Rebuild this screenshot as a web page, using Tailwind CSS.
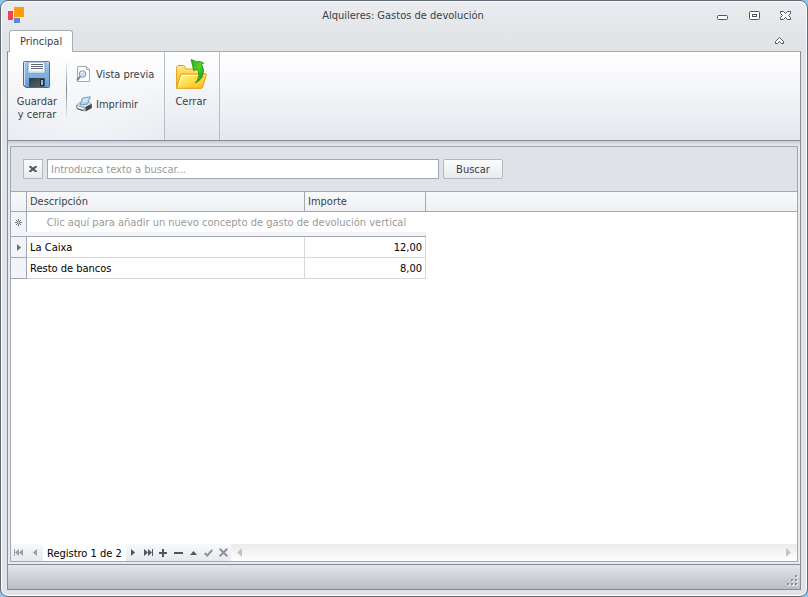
<!DOCTYPE html>
<html lang="es">
<head>
    <meta charset="UTF-8">
    <meta name="viewport" content="width=device-width, initial-scale=1.0">
    <title>Alquileres: Gastos de devolución</title>
    <script src="https://cdn.jsdelivr.net/npm/@tailwindcss/browser@4"></script>
</head>
<body class="h-screen bg-[#8fc4ee] font-['DejaVu_Sans_Condensed','DejaVu_Sans',sans-serif] text-[11px] leading-[13px] text-[#3b3e47] select-none">
    <div class="flex h-full flex-col rounded-lg border border-[#626a76] bg-linear-to-b from-[#ebecef] to-[#e0e4e7] to-[40px] px-[6px] pb-[6px] shadow-[inset_0_0_0_1px_#fafbfc]">

        <!-- Title bar -->
        <header class="flex h-[29px] shrink-0 items-center">
            <svg class="mb-px h-4 w-[17px]" viewBox="0 0 17 16" shape-rendering="crispEdges">
                <rect x="1" y="4" width="5" height="9" fill="#e8445a"/>
                <rect x="7" y="0" width="10" height="10" fill="#ff9c0a"/>
                <rect x="7" y="11" width="6" height="5" fill="#5b87d6"/>
            </svg>
            <h1 class="flex-1 pl-[68px] text-center">Alquileres: Gastos de devolución</h1>
            <div class="flex items-center gap-4 pr-[7px]">
                <button type="button" aria-label="Minimizar" class="h-4 w-4">
                    <svg class="h-4 w-4" viewBox="0 0 16 16" fill="#fff" stroke="#50555e"><rect x="3.500" y="7.500" width="10" height="4" rx="1"/></svg>
                </button>
                <button type="button" aria-label="Maximizar" class="h-4 w-4">
                    <svg class="h-4 w-4" viewBox="0 0 16 16" fill="#fff" stroke="#50555e"><rect x="3.500" y="3.500" width="10" height="8" rx="1"/><rect x="6.500" y="6.500" width="4" height="2"/></svg>
                </button>
                <button type="button" aria-label="Cerrar ventana" class="h-4 w-4">
                    <svg class="h-4 w-4" viewBox="0 0 16 16" fill="#fff" stroke="#50555e"><path d="M2.500 3.500h3l2 2 2-2h3v2l-2 2 2 2v2h-3l-2-2-2 2h-3v-2l2-2-2-2z"/></svg>
                </button>
            </div>
        </header>

        <!-- Ribbon tabs -->
        <nav class="flex h-[21px] shrink-0 items-start justify-between pr-[15px] pl-[2px]">
            <button type="button" class="z-10 h-[22px] rounded-t-[3px] border border-b-0 border-[#a9adb3] bg-white px-[10px]">Principal</button>
            <button type="button" aria-label="Contraer la cinta" class="mt-[5px] h-3 w-3">
                <svg class="h-3 w-3" viewBox="0 0 12 12" fill="#fff" stroke="#50555e"><path d="M1.500 6.500l4-4 4 4v2h-2l-2-2-2 2h-2z"/></svg>
            </button>
        </nav>

        <div class="flex min-h-0 flex-1 flex-col border border-t-[#a9adb3] border-r-[#858b95] border-b-[#858b95] border-l-[#858b95] bg-[#e7eaee]">

            <!-- Ribbon -->
            <div class="flex h-[89px] shrink-0 border-b border-[#858b95] bg-linear-to-b from-white to-[#e4e8ee]">
                <div class="flex border-r border-[#b9bec5] bg-radial-[at_50%_120%] from-white/50 to-transparent">
                    <button type="button" class="flex w-[58px] flex-col items-center pt-[6px]">
                        <svg class="mb-[5px] h-8 w-8" viewBox="0 0 32 32">
                            <defs>
                                <linearGradient id="disk" x1="0" y1="0" x2="0" y2="1"><stop offset="0" stop-color="#a5c8ea"/><stop offset=".5" stop-color="#82b1e0"/><stop offset="1" stop-color="#5d9be0"/></linearGradient>
                                <linearGradient id="shutter" x1="0" y1="0" x2="1" y2="1"><stop offset="0" stop-color="#333b44"/><stop offset="1" stop-color="#596674"/></linearGradient>
                            </defs>
                            <path d="M2.500 4.500q0-1 1-1h24q1 0 1 1v24q0 1-1 1H5l-2.500-2z" fill="url(#disk)" stroke="#4a6a94"/>
                            <path d="M3.500 27V4.500h24" fill="none" stroke="#cfe2f5"/>
                            <rect x="7" y="4" width="17" height="11" fill="#fff" stroke="#6f9bcb"/>
                            <path d="M7.500 12.500h16v2h-16z" fill="#dce5ee"/>
                            <path d="M10 6.500h12M10 8.500h12M10 10.500h12" stroke="#5f6670"/>
                            <rect x="8" y="20" width="16" height="9" fill="url(#shutter)"/>
                            <rect x="19.500" y="21.500" width="3" height="6" fill="#8dbdf0" stroke="#222a33"/>
                        </svg>
                        Guardar<br>y cerrar
                    </button>
                    <div class="mt-2 h-[60px] w-px bg-linear-to-b from-transparent via-[#7d8590] to-transparent"></div>
                    <div class="flex w-[97px] flex-col items-start gap-[14px] pt-[14px] pl-[9px]">
                        <button type="button" class="flex h-4 items-center gap-1">
                            <svg class="h-4 w-4" viewBox="0 0 16 16">
                                <path d="M1.500.500h9l3 3v12h-12z" fill="#fdfdfe" stroke="#a4a8b0"/>
                                <path d="M10.500.500v3h3" fill="#e2e5ea" stroke="#a4a8b0"/>
                                <circle cx="6.500" cy="8" r="3.300" fill="#c9e0f6" stroke="#8095b0"/>
                                <path d="M5 7.500q.500-1.500 2-1.500" fill="none" stroke="#fff"/>
                                <path d="M4.200 10.500L1 14.500" stroke="#777d88" stroke-width="2"/>
                            </svg>
                            Vista previa
                        </button>
                        <button type="button" class="flex h-4 items-center gap-1">
                            <svg class="h-4 w-4" viewBox="0 0 16 16">
                                <path d="M.500 9L4 6.500 13 6l2.500 2v4L10 15l-3-.500L.500 12z" fill="#a6abb4" stroke="#7a808a" stroke-width=".7"/>
                                <path d="M.800 9L4 6.700l9-.400 2.300 1.700L9.500 11z" fill="#dde0e4"/>
                                <path d="M9.500 11l6-3v4L10 15z" fill="#3f444d"/>
                                <path d="M4 9L6.500 2 14.500.800l-3 7.200z" fill="#a9d6f8" stroke="#6f8dae" stroke-width=".8"/>
                                <path d="M7.500 3.500l4.500-.700M6.800 5.500l4.500-.700" stroke="#e6f4ff"/>
                                <path d="M1.500 11l6 2" stroke="#fff" stroke-width="1.500"/>
                                <path d="M1 12.500l6 2.200" stroke="#4a4f59"/>
                            </svg>
                            Imprimir
                        </button>
                    </div>
                </div>
                <div class="border-r border-[#b9bec5]">
                    <button type="button" class="flex w-[54px] flex-col items-center pt-[6px] pr-[2px]">
                        <svg class="mb-[5px] h-8 w-8" viewBox="0 0 32 32">
                            <defs>
                                <linearGradient id="folderBack" x1="0" y1="0" x2="0" y2="1"><stop offset="0" stop-color="#ffe88c"/><stop offset="1" stop-color="#f7b520"/></linearGradient>
                                <linearGradient id="folderFront" x1="0" y1="0" x2="1" y2="1"><stop offset="0" stop-color="#fff7a8"/><stop offset=".5" stop-color="#ffdc45"/><stop offset="1" stop-color="#fdb913"/></linearGradient>
                                <linearGradient id="arrow" x1="0" y1="0" x2="1" y2="1"><stop offset="0" stop-color="#2fae1e"/><stop offset=".5" stop-color="#4fd62a"/><stop offset="1" stop-color="#13800e"/></linearGradient>
                            </defs>
                            <path d="M1.500 29V9.500l1.500-2h6l2 3.500h15q1.500 0 1.500 1.500V29z" fill="url(#folderBack)" stroke="#e8a317"/>
                            <path d="M1.500 30.300L5.500 17q.300-1 1.500-1h24.500L27.500 29q-.300 1.300-1.500 1.300z" fill="url(#folderFront)" stroke="#e79a10"/>
                            <path d="M3.500 28.500L6.800 17.500h23" fill="none" stroke="#fffbd0"/>
                            <path d="M16.200 1.500l5.500 2.300q4.500-1 7 1.500-1.500.200-2 1.200 2.800 5 1.300 10-1.500 5.500-7.500 8.300 3.500-4 3.300-8.300-.100-3-1.300-5.300l-3.800 1.300z" fill="url(#arrow)" stroke="#178a12" stroke-width=".8"/>
                        </svg>
                        Cerrar
                    </button>
                </div>
            </div>

            <!-- Grid panel -->
            <main class="flex min-h-0 flex-1 flex-col bg-linear-to-b from-[#c9cdd4] to-[#e7eaee] to-[5px] px-[2px] pt-[5px] pb-[2px]">
                <div class="flex min-h-0 flex-1 flex-col border border-[#a1a8b4] bg-white">
                    <form class="flex h-[45px] shrink-0 items-center border-b border-[#a1a8b4] bg-[#dfe2e6] pb-px pl-3">
                        <button type="button" aria-label="Borrar búsqueda" class="mr-1 flex h-5 w-5 items-center justify-center border border-[#b3b8c1] bg-linear-to-b from-[#fafbfc] to-[#e8ebee]">
                            <svg class="h-[6px] w-2" viewBox="0 0 8 6" stroke="#50565f" stroke-width="2"><path d="M.500 0l7 6M7.500 0l-7 6"/></svg>
                        </button>
                        <input type="text" aria-label="Buscar texto" placeholder="Introduzca texto a buscar..." class="mr-1 h-5 w-[392px] border border-[#a1a8b4] bg-white px-[3px] pt-px outline-none placeholder:text-[#9a9a9a]">
                        <button type="button" class="h-5 w-[60px] rounded-[2px] border border-[#b3b8c1] bg-linear-to-b from-[#fafbfc] to-[#e8ebee] pt-px">Buscar</button>
                    </form>

                    <div class="min-h-0 flex-1 overflow-hidden">
                        <table class="w-full table-fixed border-separate border-spacing-0 text-black">
                            <colgroup>
                                <col class="w-4">
                                <col class="w-[278px]">
                                <col class="w-[121px]">
                                <col>
                            </colgroup>
                            <thead>
                                <tr class="h-5 bg-linear-to-b from-[#f8f9fb] to-[#eef0f4] text-left text-[#3b3e47]">
                                    <th class="border-r border-b border-[#a1a8b4] p-0"></th>
                                    <th class="border-r border-b border-[#a1a8b4] px-[3px] py-0 font-normal">Descripción</th>
                                    <th class="border-r border-b border-[#a1a8b4] px-[3px] py-0 font-normal">Importe</th>
                                    <th class="border-b border-[#a1a8b4] p-0"></th>
                                </tr>
                            </thead>
                            <tbody>
                                <tr class="h-5">
                                    <td class="border-r border-[#a1a8b4] bg-[#f3f4f7] p-0">
                                        <svg class="mx-auto h-[7px] w-[7px]" viewBox="0 0 7 7" stroke="#6a707a"><path d="M3.500 0v7M0 3.500h7M1 1l5 5M6 1L1 6"/><circle cx="3.500" cy="3.500" r="1" fill="#fff" stroke="none"/></svg>
                                    </td>
                                    <td colspan="2" class="p-0 pt-px text-center whitespace-nowrap text-[#9a9a9a]">Clic aquí para añadir un nuevo concepto de gasto de devolución vertical</td>
                                    <td class="p-0"></td>
                                </tr>
                                <tr class="h-[5px]">
                                    <td colspan="3" class="border-b border-[#a1a8b4] bg-[#f3f4f7] p-0"></td>
                                    <td class="p-0"></td>
                                </tr>
                                <tr class="h-[21px]">
                                    <td class="border-r border-b border-[#a1a8b4] bg-[#f3f4f7] p-0">
                                        <svg class="mx-auto h-[7px] w-1" viewBox="0 0 4 7" fill="#6a707a"><path d="M0 0l4 3.500L0 7z"/></svg>
                                    </td>
                                    <td class="border-r border-b border-[#d5d8dd] px-[3px] py-0">La Caixa</td>
                                    <td class="border-r border-b border-[#d5d8dd] px-[3px] py-0 text-right">12,00</td>
                                    <td class="p-0"></td>
                                </tr>
                                <tr class="h-[21px]">
                                    <td class="border-r border-b border-[#a1a8b4] bg-[#f3f4f7] p-0"></td>
                                    <td class="border-r border-b border-[#d5d8dd] px-[3px] py-0">Resto de bancos</td>
                                    <td class="border-r border-b border-[#d5d8dd] px-[3px] py-0 text-right">8,00</td>
                                    <td class="p-0"></td>
                                </tr>
                            </tbody>
                        </table>
                    </div>

                    <!-- Record navigator -->
                    <div class="flex h-[17px] shrink-0 bg-linear-to-b from-[#f8f9fb] to-[#e6e9ed] text-[#4f5661]">
                        <button type="button" aria-label="Primero" class="flex w-[15px] items-center justify-center text-[#9a9ea6]">
                            <svg class="h-[7px] w-[9px]" viewBox="0 0 9 7" fill="currentColor"><path d="M0 0h1v7H0zM5 0v7L1 3.500zM9 0v7L5 3.500z"/></svg>
                        </button>
                        <button type="button" aria-label="Anterior" class="flex w-[17px] items-center justify-center text-[#9a9ea6]">
                            <svg class="h-[7px] w-1" viewBox="0 0 4 7" fill="currentColor"><path d="M4 0v7L0 3.500z"/></svg>
                        </button>
                        <span class="bg-white px-1 pt-[3px]">
                            <span class="block text-black">Registro 1 de 2</span>
                        </span>
                        <button type="button" aria-label="Siguiente" class="flex w-[15px] items-center justify-center">
                            <svg class="h-[7px] w-1" viewBox="0 0 4 7" fill="currentColor"><path d="M0 0l4 3.500L0 7z"/></svg>
                        </button>
                        <button type="button" aria-label="Último" class="flex w-[15px] items-center justify-center">
                            <svg class="h-[7px] w-[9px]" viewBox="0 0 9 7" fill="currentColor"><path d="M0 0l4 3.500L0 7zM4 0l4 3.500L4 7zM8 0h1v7H8z"/></svg>
                        </button>
                        <button type="button" aria-label="Añadir" class="flex w-[15px] items-center justify-center">
                            <svg class="h-2 w-2" viewBox="0 0 8 8" fill="currentColor"><path d="M3 0h2v3h3v2H5v3H3V5H0V3h3z"/></svg>
                        </button>
                        <button type="button" aria-label="Eliminar" class="flex w-[15px] items-center justify-center">
                            <svg class="h-2 w-[9px]" viewBox="0 0 9 8" fill="currentColor"><path d="M0 3h9v2H0z"/></svg>
                        </button>
                        <button type="button" aria-label="Editar" class="flex w-[15px] items-center justify-center">
                            <svg class="h-1 w-[7px]" viewBox="0 0 7 4" fill="currentColor"><path d="M3.500 0L7 4H0z"/></svg>
                        </button>
                        <button type="button" aria-label="Aceptar" class="flex w-[15px] items-center justify-center text-[#8d929a]">
                            <svg class="h-2 w-[9px]" viewBox="0 0 9 8" fill="none" stroke="currentColor" stroke-width="2"><path d="M.700 4l2.500 2.500L8.300 1"/></svg>
                        </button>
                        <button type="button" aria-label="Cancelar" class="flex w-[15px] items-center justify-center text-[#8d929a]">
                            <svg class="h-[9px] w-[9px]" viewBox="0 0 9 9" stroke="currentColor" stroke-width="2"><path d="M.700.700l7.600 7.600M8.300.700L.700 8.300"/></svg>
                        </button>
                        <div class="flex flex-1 items-center justify-between bg-linear-to-b from-[#ebebeb] to-white px-[6px] text-[#c4c4c4]">
                            <button type="button" aria-label="Desplazar a la izquierda"><svg class="h-[9px] w-[5px]" viewBox="0 0 5 9" fill="currentColor"><path d="M5 0v9L0 4.500z"/></svg></button>
                            <button type="button" aria-label="Desplazar a la derecha"><svg class="h-[9px] w-[5px]" viewBox="0 0 5 9" fill="currentColor"><path d="M0 0l5 4.500L0 9z"/></svg></button>
                        </div>
                    </div>
                </div>
            </main>

            <!-- Status bar -->
            <footer class="flex h-[25px] shrink-0 items-end justify-end border-t border-[#858b95] bg-linear-to-b from-[#e2e5e9] to-[#bbbfc5] pr-[2px] pb-[3px]">
                <svg class="h-3 w-3" viewBox="0 0 12 12" shape-rendering="crispEdges">
                    <path d="M10 2h2v2h-2zM6 6h2v2H6zM10 6h2v2h-2zM2 10h2v2H2zM6 10h2v2H6zM10 10h2v2h-2z" fill="#f0f2f4"/>
                    <path d="M9 1h2v2H9zM5 5h2v2H5zM9 5h2v2H9zM1 9h2v2H1zM5 9h2v2H5zM9 9h2v2H9z" fill="#8f949c"/>
                </svg>
            </footer>
        </div>
    </div>
</body>
</html>
